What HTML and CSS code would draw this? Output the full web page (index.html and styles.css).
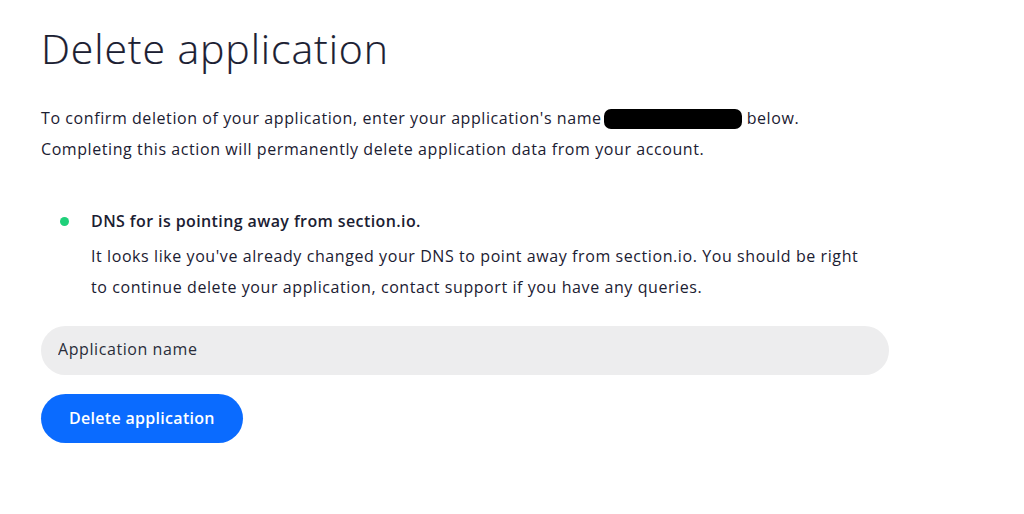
FILE: index.html
```html
<!DOCTYPE html>
<html lang="en">
<head>
<meta charset="utf-8">
<title>Delete application</title>
<link rel="stylesheet" href="styles.css">
</head>
<body>
<main class="page">
  <h1 class="title">Delete application</h1>
  <p class="intro">To confirm deletion of your application, enter your application's name<span class="redacted"></span>below.<br>Completing this action will permanently delete application data from your account.</p>
  <ul class="checks">
    <li class="check">
      <span class="dot"></span>
      <div class="check-body">
        <div class="check-title">DNS for is pointing away from section.io.</div>
        <p class="check-text">It looks like you've already changed your DNS to point away from section.io. You should be right to continue delete your application, contact support if you have any queries.</p>
      </div>
    </li>
  </ul>
  <input class="name-input" type="text" placeholder="Application name">
  <button class="btn-delete" type="button">Delete application</button>
</main>
</body>
</html>
```
FILE: styles.css
```css
* { box-sizing: border-box; }
html, body { margin: 0; background: #fff; }
body {
  font-family: "Open Sans", "Noto Sans", "Liberation Sans", sans-serif;
  color: #1b2032;
  letter-spacing: 0.58px;
}
.page {
  padding: 24px 0 0 41px;
  width: 889px;
  display: flex;
  flex-direction: column;
  align-items: flex-start;
}
.title {
  margin: 0;
  font-size: 41px;
  font-weight: 300;
  line-height: 48px;
  letter-spacing: 0.9px;
  -webkit-text-stroke: 0.2px #1b2032;
}
.intro {
  margin: 31px 0 0;
  font-size: 16px;
  line-height: 31px;
}
.redacted {
  display: inline-block;
  width: 138px;
  height: 20px;
  background: #000;
  border-radius: 7px;
  vertical-align: -5px;
  margin: 0 5px 0 2px;
}
.checks {
  list-style: none;
  margin: 41px 0 0;
  padding: 0;
}
.check {
  display: flex;
  align-items: flex-start;
}
.dot {
  width: 9px;
  height: 9px;
  border-radius: 50%;
  background: #1fd07a;
  margin: 11px 0 0 19px;
  flex: none;
}
.check-body {
  margin-left: 22px;
  width: 772px;
}
.check-title {
  font-size: 16px;
  font-weight: 600;
  line-height: 31px;
  letter-spacing: 0.4px;
}
.check-text {
  margin: 4px 0 0;
  font-size: 16px;
  line-height: 31px;
}
.name-input {
  margin-top: 23px;
  width: 848px;
  height: 49px;
  border: none;
  border-radius: 25px;
  background: #ededee;
  padding: 0 17px 3px;
  font: inherit;
  font-size: 16px;
  letter-spacing: 0.58px;
  color: #1b2032;
  outline: none;
}
.name-input::placeholder { color: #2a2d3a; opacity: 1; }
.btn-delete {
  margin-top: 19px;
  height: 49px;
  padding: 0 28px 1px;
  border: none;
  border-radius: 25px;
  background: #0a6bff;
  color: #fff;
  font-family: inherit;
  font-size: 16px;
  font-weight: 600;
  letter-spacing: 0.3px;
}
```
